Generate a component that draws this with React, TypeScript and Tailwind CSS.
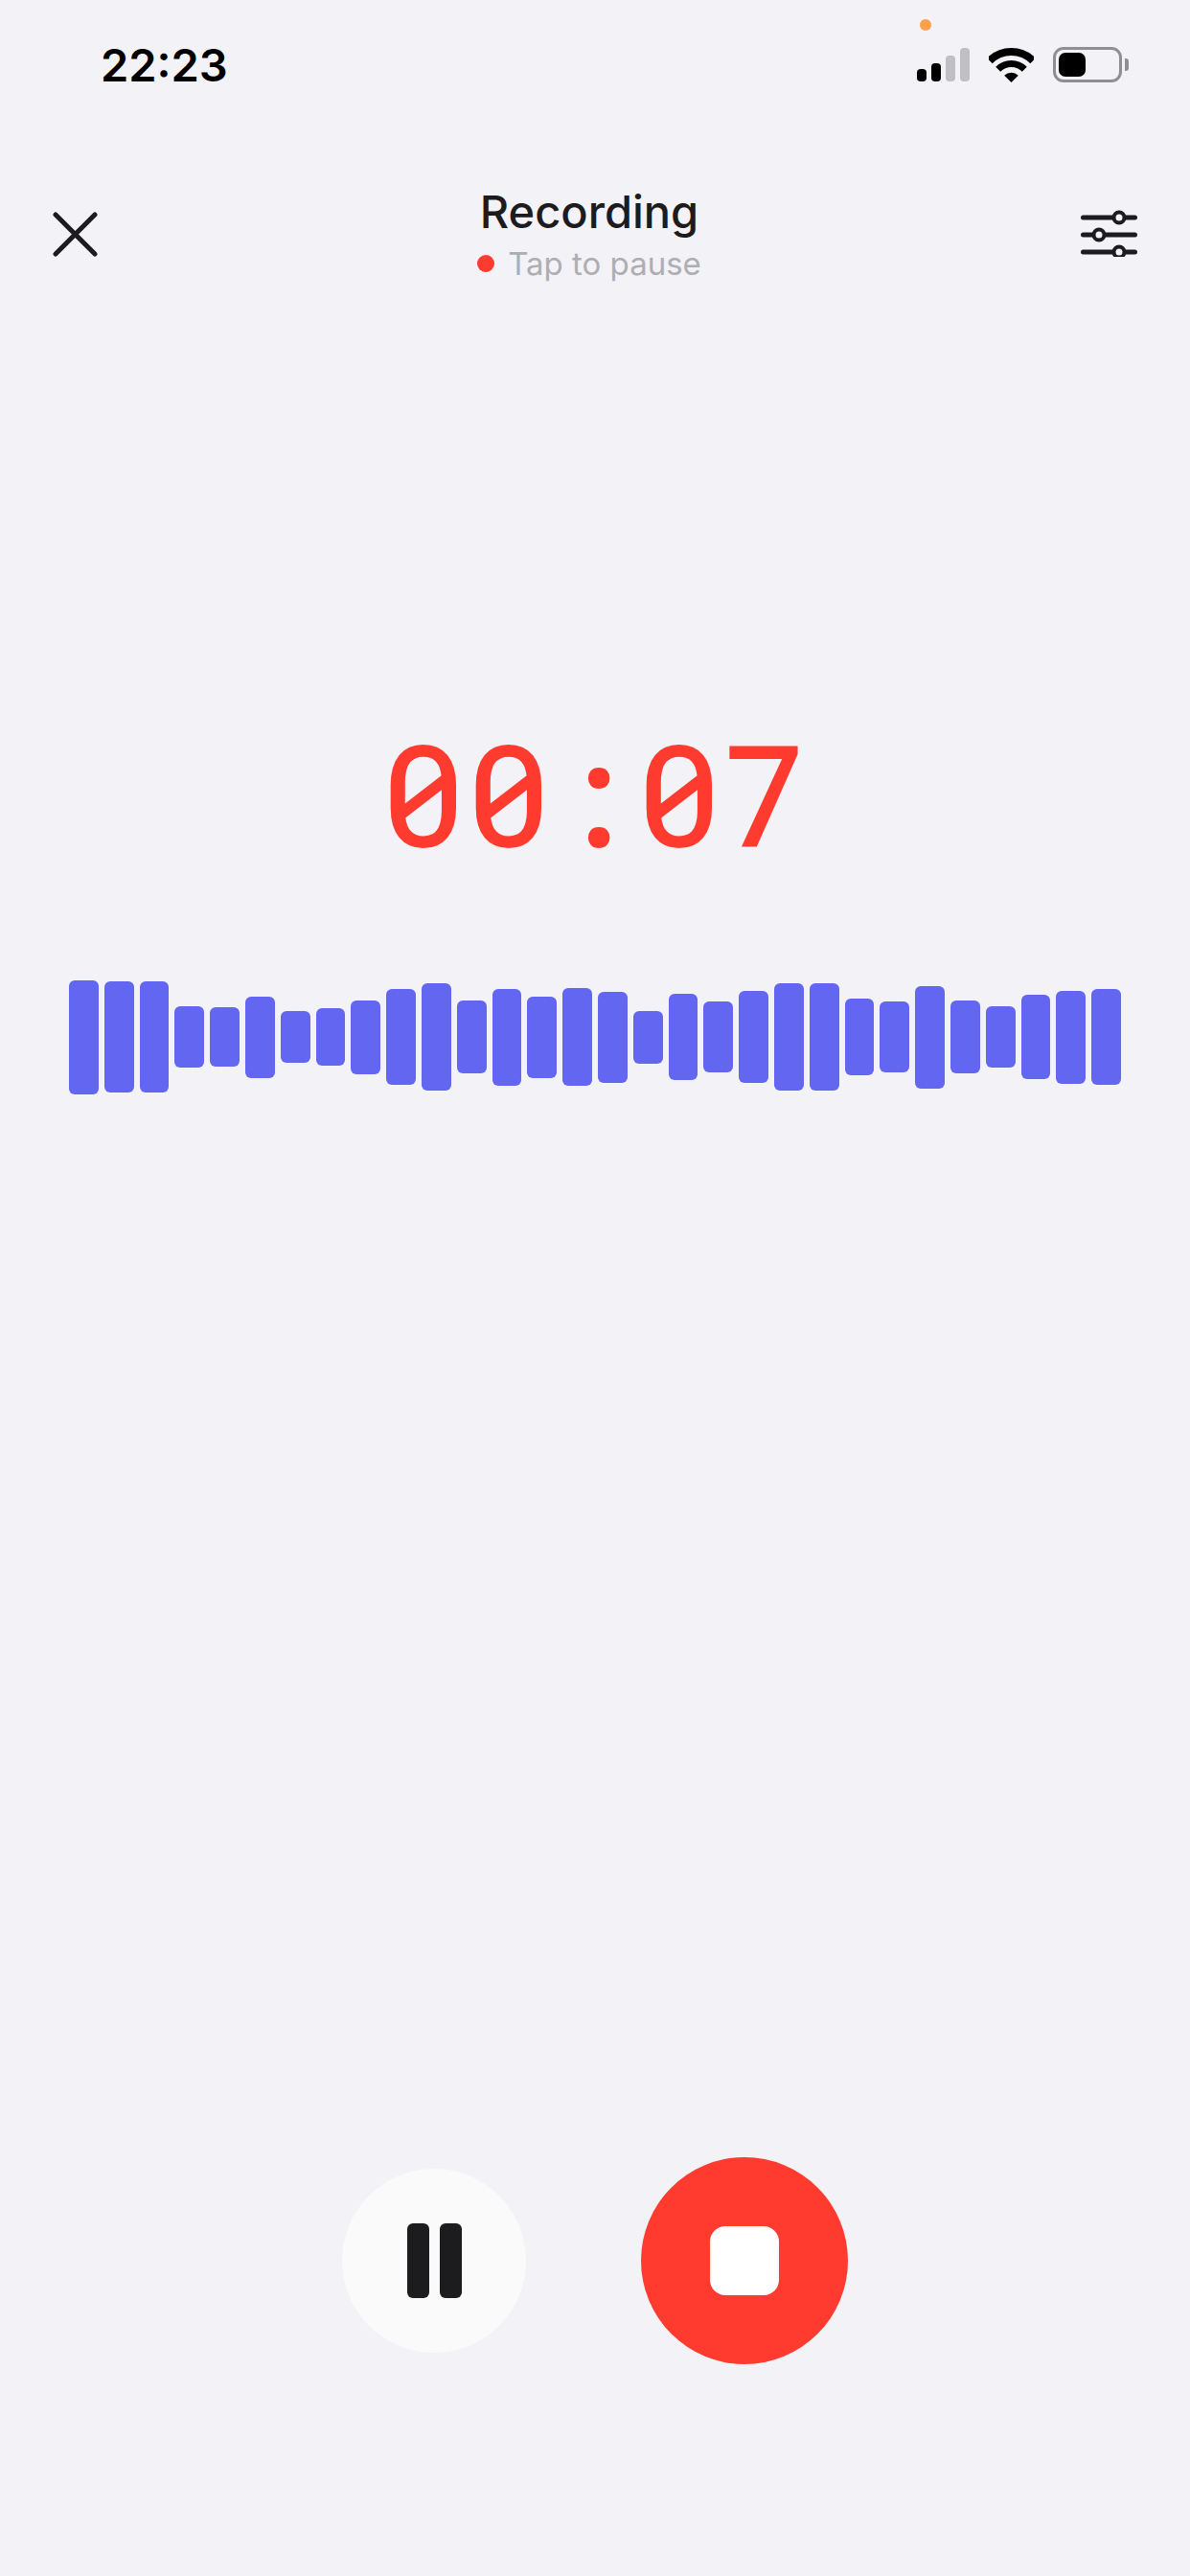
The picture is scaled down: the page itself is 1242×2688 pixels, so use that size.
const heights = [119,116,116,64,62,85,54,60,77,100,112,76,101,85,102,95,55,90,74,96,112,112,80,74,107,76,64,88,97,100];
const signal = [
  { h: "h-[13px]", c: "bg-black" },
  { h: "h-[19px]", c: "bg-black" },
  { h: "h-[27px]", c: "bg-[#bfbfc4]" },
  { h: "h-[35px]", c: "bg-[#bfbfc4]" },
];

export default function App() {
  return (
    <div className="relative flex h-[2688px] w-[1242px] flex-col overflow-hidden bg-[#f2f2f7] font-['Inter',sans-serif]">
      <div className="absolute left-[960px] top-[20px] h-[12px] w-[12px] rounded-full bg-[#ff9f4a]" />

      <div className="mt-[49px] flex h-[37px] items-center justify-between pl-[105px] pr-[64px]">
        <span className="text-[47px] font-semibold leading-none text-black">22:23</span>
        <div className="flex items-center">
          <div className="flex h-[35px] items-end gap-[4.5px]">
            {signal.map((s, i) => (
              <div key={i} className={`w-[10.5px] rounded-[4px] ${s.h} ${s.c}`} />
            ))}
          </div>
          <svg className="ml-[20px]" width="47" height="36" viewBox="0 0 47 36">
            <path d="M0.9 13.4A32 32 0 0 1 46.1 13.4" fill="none" stroke="#000" strokeWidth="8" />
            <path d="M9.7 22.2A19.5 19.5 0 0 1 37.3 22.2" fill="none" stroke="#000" strokeWidth="7" />
            <path d="M23.5 36L16.2 28.7A10.3 10.3 0 0 1 30.8 28.7Z" fill="#000" />
          </svg>
          <div className="ml-[20px] flex h-[37px] w-[72px] items-center rounded-[11px] border-[3px] border-[#8e8e93] pl-[3px]">
            <div className="h-[25px] w-[28px] rounded-[7px] bg-black" />
          </div>
          <div className="ml-[3px] h-[13px] w-[4px] rounded-r-[3px] bg-[#8e8e93]" />
        </div>
      </div>

      <div className="mt-[108px] flex items-start justify-between pl-[55px] pr-[55px]">
        <svg className="mt-[27px]" width="47" height="47" viewBox="0 0 47 47" fill="none" stroke="#1c1c1e" strokeWidth="5" strokeLinecap="round">
          <path d="M3 3L44 44M44 3L3 44" />
        </svg>
        <div className="flex flex-col items-center">
          <span className="text-[47px] font-medium leading-[54px] text-[#1c1c1e]">Recording</span>
          <div className="mt-[7px] flex items-center gap-[14px]">
            <div className="h-[18px] w-[18px] rounded-full bg-[#ff3b30]" />
            <span className="text-[33px] leading-[40px] text-[#aeaeb2]">Tap to pause</span>
          </div>
        </div>
        <svg className="mt-[25px]" width="59" height="49" viewBox="0 0 59 49" fill="none" stroke="#1c1c1e" strokeWidth="5" strokeLinecap="round">
          <path d="M2.5 8H56.5M2.5 26H56.5M2.5 44H56.5" />
          <circle cx="40" cy="8" r="5.5" fill="#f2f2f7" strokeWidth="4" />
          <circle cx="19" cy="26" r="5.5" fill="#f2f2f7" strokeWidth="4" />
          <circle cx="40" cy="44" r="5.5" fill="#f2f2f7" strokeWidth="4" />
        </svg>
      </div>

      <div className="mt-[447px] flex justify-center font-['Roboto_Mono','DejaVu_Sans_Mono',monospace] text-[144px] font-normal leading-[170px] tracking-[2.6px] text-[#ff3b30] [-webkit-text-stroke:2px_#ff3b30]">
        00:07
      </div>

      <div className="mt-[110px] flex h-[120px] items-center gap-[6px] px-[72px]">
        {heights.map((h, i) => (
          <div key={i} className="flex-1 rounded-[6px] bg-[#6366f1]" style={{ height: h }} />
        ))}
      </div>

      <div className="mt-[1109px] flex items-center justify-center gap-[120px]">
        <div className="flex h-[192px] w-[192px] items-center justify-center gap-[11px] rounded-full bg-[#fafafa]">
          <div className="h-[78px] w-[23px] rounded-[6px] bg-[#1c1c1e]" />
          <div className="h-[78px] w-[23px] rounded-[6px] bg-[#1c1c1e]" />
        </div>
        <div className="flex h-[216px] w-[216px] items-center justify-center rounded-full bg-[#ff3b30]">
          <div className="h-[72px] w-[72px] rounded-[16px] bg-white" />
        </div>
      </div>
    </div>
  );
}
